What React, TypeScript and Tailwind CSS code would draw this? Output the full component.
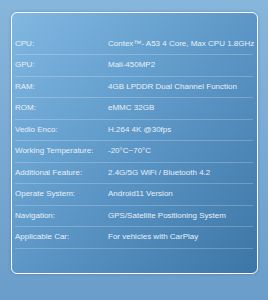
import React from "react";

const rows: [string, string][] = [
  ["CPU:", "Contex™- A53 4 Core, Max CPU 1.8GHz"],
  ["GPU:", "Mali-450MP2"],
  ["RAM:", "4GB LPDDR Dual Channel Function"],
  ["ROM:", "eMMC 32GB"],
  ["Vedio Enco:", "H.264 4K @30fps"],
  ["Working Temperature:", "-20°C~70°C"],
  ["Additional Feature:", "2.4G/5G WiFi / Bluetooth 4.2"],
  ["Operate System:", "Android11 Version"],
  ["Navigation:", "GPS/Satellite Positioning System"],
  ["Applicable Car:", "For vehicles with CarPlay"],
];

export default function App() {
  return (
    <div
      className="w-[268px] h-[300px] pt-[12px] pl-[11px] bg-gradient-to-b from-[#87b6dc] to-[#6b9dca]"
      style={{ fontFamily: '"Liberation Sans", Arial, sans-serif' }}
    >
      <div className="w-[247px] h-[262px] rounded-[6px] border border-white bg-gradient-to-br from-[#80b8e1] via-[#5c97c7] to-[#3c76a7] shadow-[0_0_3px_rgba(40,80,120,0.35)] pt-[20.5px] pl-[3px] pr-[4px]">
        {rows.map(([k, v]) => (
          <div
            key={k}
            className="flex items-center h-[21.5px] border-b border-[rgba(255,255,255,0.22)] text-[8px] text-[#e8f0f8] leading-none"
          >
            <div className="w-[93px] shrink-0">{k}</div>
            <div className="whitespace-nowrap">{v}</div>
          </div>
        ))}
      </div>
    </div>
  );
}
